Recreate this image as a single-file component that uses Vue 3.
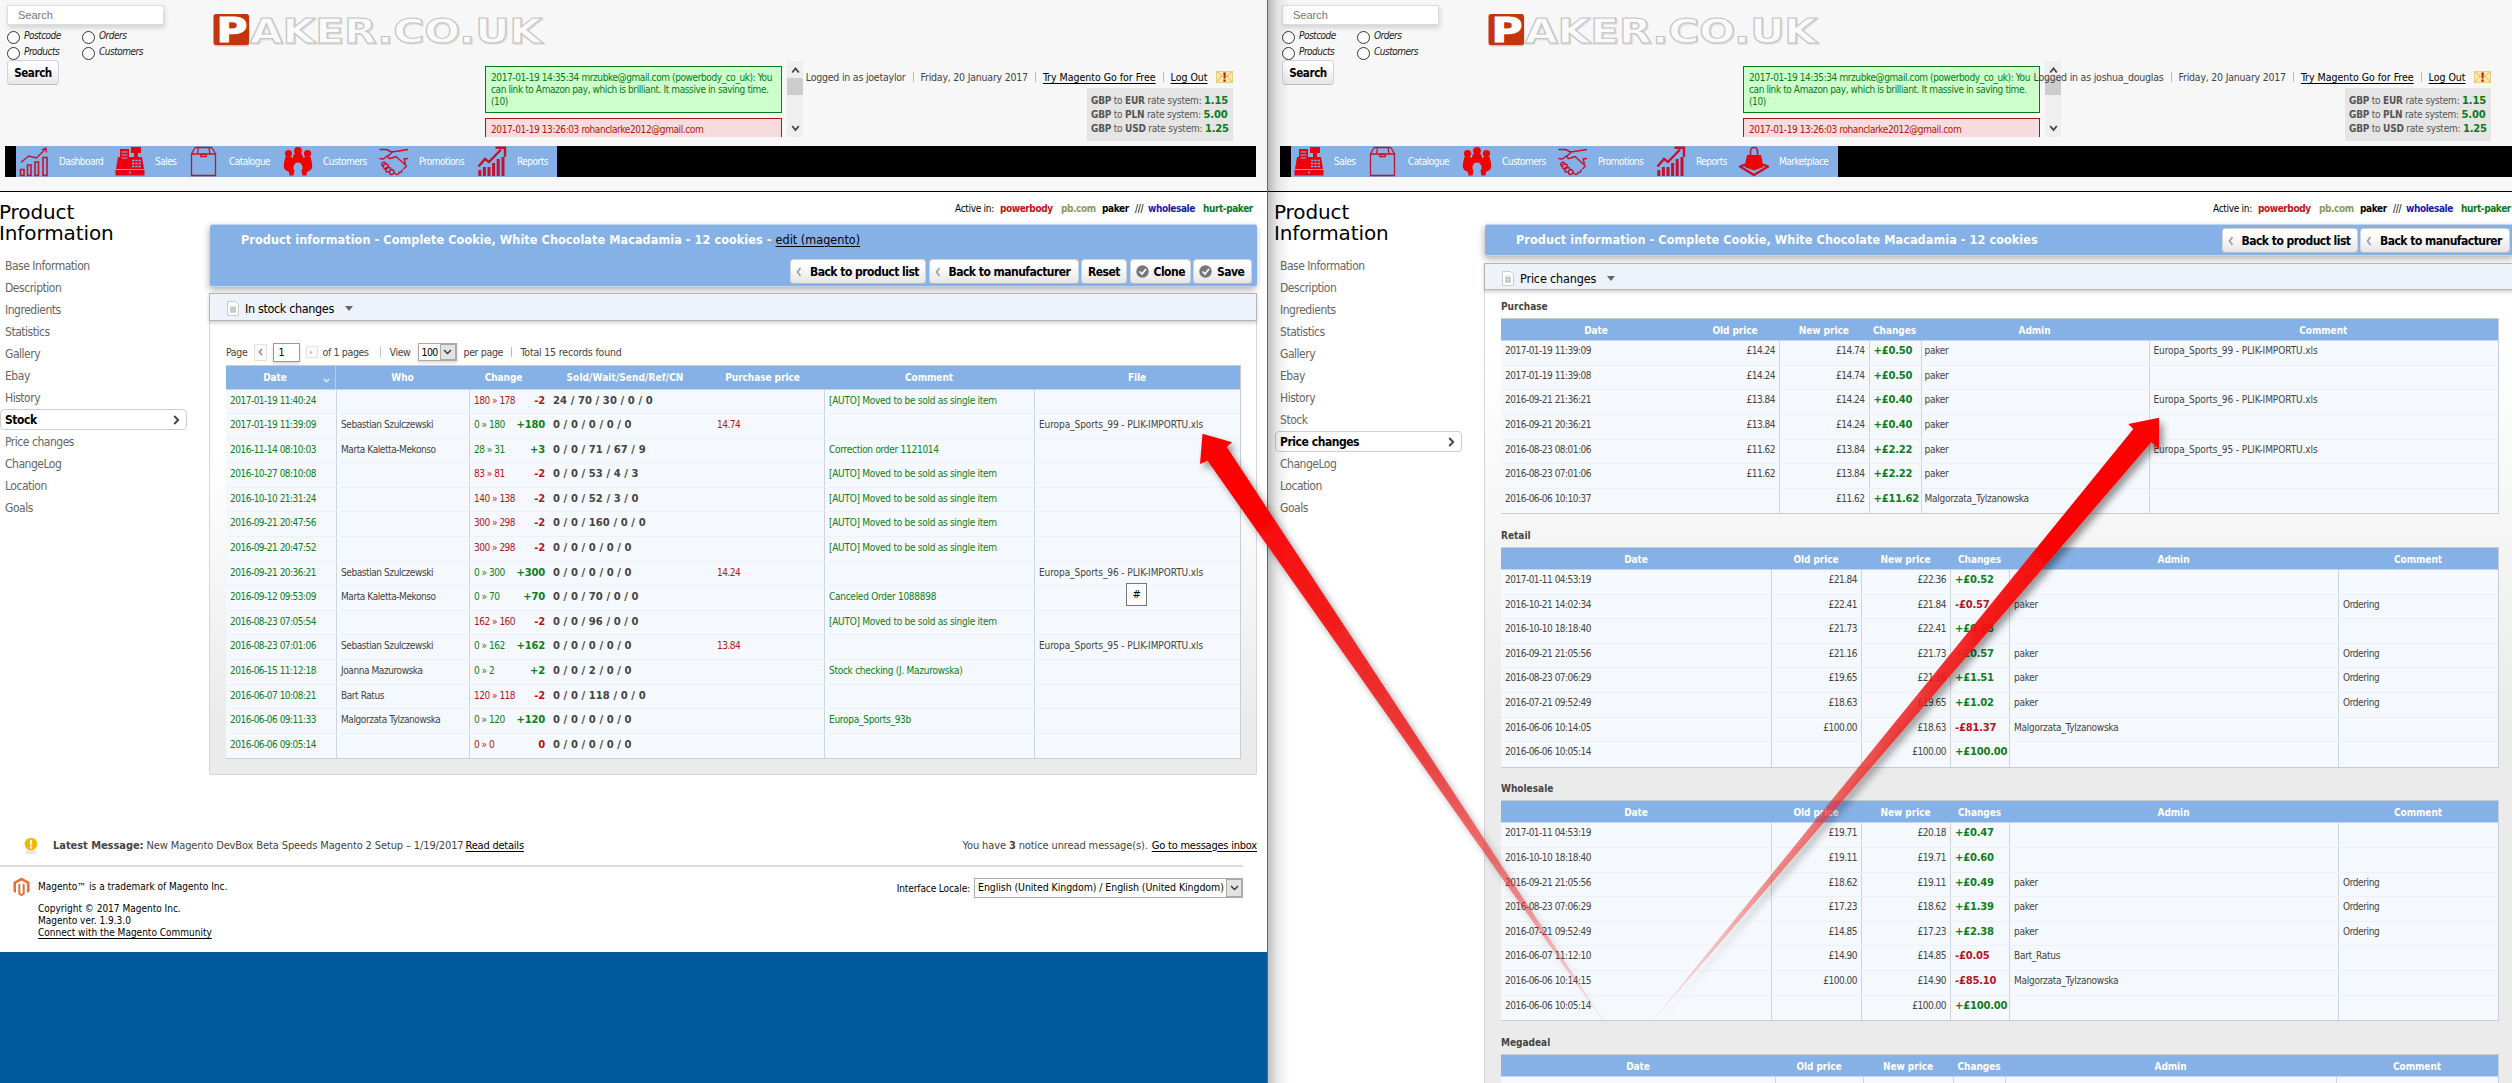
<script setup>
const sideItems = ['Base Information', 'Description', 'Ingredients', 'Statistics', 'Gallery', 'Ebay', 'History', 'Stock', 'Price changes', 'ChangeLog', 'Location', 'Goals']
const rates = [['EUR', '1.15'], ['PLN', '5.00'], ['USD', '1.25']]

const nav = {
  dashboard: { label: 'Dashboard', w: 96 },
  sales: { label: 'Sales', w: 74 },
  catalogue: { label: 'Catalogue', w: 94 },
  customers: { label: 'Customers', w: 96 },
  promotions: { label: 'Promotions', w: 98 },
  reports: { label: 'Reports', w: 83 },
  marketplace: { label: 'Marketplace', w: 102 }
}

const panes = [
  { id: 'stock', user: 'joetaylor', active: 'Stock', section: 'In stock changes', nav: ['dashboard', 'sales', 'catalogue', 'customers', 'promotions', 'reports'] },
  { id: 'price', user: 'joshua_douglas', active: 'Price changes', section: 'Price changes', nav: ['sales', 'catalogue', 'customers', 'promotions', 'reports', 'marketplace'] }
]

const auto = '[AUTO] Moved to be sold as single item'
const stock = [
  ['2017-01-19 11:40:24', '', '180 » 178', '-2', '24 / 70 / 30 / 0 / 0', '', auto, ''],
  ['2017-01-19 11:39:09', 'Sebastian Szulczewski', '0 » 180', '+180', '0 / 0 / 0 / 0 / 0', '14.74', '', 'Europa_Sports_99 - PLIK-IMPORTU.xls'],
  ['2016-11-14 08:10:03', 'Marta Kaletta-Mekonso', '28 » 31', '+3', '0 / 0 / 71 / 67 / 9', '', 'Correction order 1121014', ''],
  ['2016-10-27 08:10:08', '', '83 » 81', '-2', '0 / 0 / 53 / 4 / 3', '', auto, ''],
  ['2016-10-10 21:31:24', '', '140 » 138', '-2', '0 / 0 / 52 / 3 / 0', '', auto, ''],
  ['2016-09-21 20:47:56', '', '300 » 298', '-2', '0 / 0 / 160 / 0 / 0', '', auto, ''],
  ['2016-09-21 20:47:52', '', '300 » 298', '-2', '0 / 0 / 0 / 0 / 0', '', auto, ''],
  ['2016-09-21 20:36:21', 'Sebastian Szulczewski', '0 » 300', '+300', '0 / 0 / 0 / 0 / 0', '14.24', '', 'Europa_Sports_96 - PLIK-IMPORTU.xls'],
  ['2016-09-12 09:53:09', 'Marta Kaletta-Mekonso', '0 » 70', '+70', '0 / 0 / 70 / 0 / 0', '', 'Canceled Order 1088898', ''],
  ['2016-08-23 07:05:54', '', '162 » 160', '-2', '0 / 0 / 96 / 0 / 0', '', auto, ''],
  ['2016-08-23 07:01:06', 'Sebastian Szulczewski', '0 » 162', '+162', '0 / 0 / 0 / 0 / 0', '13.84', '', 'Europa_Sports_95 - PLIK-IMPORTU.xls'],
  ['2016-06-15 11:12:18', 'Joanna Mazurowska', '0 » 2', '+2', '0 / 0 / 2 / 0 / 0', '', 'Stock checking (J. Mazurowska)', ''],
  ['2016-06-07 10:08:21', 'Bart Ratus', '120 » 118', '-2', '0 / 0 / 118 / 0 / 0', '', '', ''],
  ['2016-06-06 09:11:33', 'Malgorzata Tylzanowska', '0 » 120', '+120', '0 / 0 / 0 / 0 / 0', '', 'Europa_Sports_93b', ''],
  ['2016-06-06 09:05:14', '', '0 » 0', '0', '0 / 0 / 0 / 0 / 0', '', '', '']
]

const tables = [
  {
    name: 'Purchase', cls: 'purchase', rows: [
      ['2017-01-19 11:39:09', '£14.24', '£14.74', '+£0.50', 'paker', 'Europa_Sports_99 - PLIK-IMPORTU.xls'],
      ['2017-01-19 11:39:08', '£14.24', '£14.74', '+£0.50', 'paker', ''],
      ['2016-09-21 21:36:21', '£13.84', '£14.24', '+£0.40', 'paker', 'Europa_Sports_96 - PLIK-IMPORTU.xls'],
      ['2016-09-21 20:36:21', '£13.84', '£14.24', '+£0.40', 'paker', ''],
      ['2016-08-23 08:01:06', '£11.62', '£13.84', '+£2.22', 'paker', 'Europa_Sports_95 - PLIK-IMPORTU.xls'],
      ['2016-08-23 07:01:06', '£11.62', '£13.84', '+£2.22', 'paker', ''],
      ['2016-06-06 10:10:37', '', '£11.62', '+£11.62', 'Malgorzata_Tylzanowska', '']
    ]
  },
  {
    name: 'Retail', cls: 'retail', rows: [
      ['2017-01-11 04:53:19', '£21.84', '£22.36', '+£0.52', '', ''],
      ['2016-10-21 14:02:34', '£22.41', '£21.84', '-£0.57', 'paker', 'Ordering'],
      ['2016-10-10 18:18:40', '£21.73', '£22.41', '+£0.68', '', ''],
      ['2016-09-21 21:05:56', '£21.16', '£21.73', '+£0.57', 'paker', 'Ordering'],
      ['2016-08-23 07:06:29', '£19.65', '£21.16', '+£1.51', 'paker', 'Ordering'],
      ['2016-07-21 09:52:49', '£18.63', '£19.65', '+£1.02', 'paker', 'Ordering'],
      ['2016-06-06 10:14:05', '£100.00', '£18.63', '-£81.37', 'Malgorzata_Tylzanowska', ''],
      ['2016-06-06 10:05:14', '', '£100.00', '+£100.00', '', '']
    ]
  },
  {
    name: 'Wholesale', cls: 'retail', rows: [
      ['2017-01-11 04:53:19', '£19.71', '£20.18', '+£0.47', '', ''],
      ['2016-10-10 18:18:40', '£19.11', '£19.71', '+£0.60', '', ''],
      ['2016-09-21 21:05:56', '£18.62', '£19.11', '+£0.49', 'paker', 'Ordering'],
      ['2016-08-23 07:06:29', '£17.23', '£18.62', '+£1.39', 'paker', 'Ordering'],
      ['2016-07-21 09:52:49', '£14.85', '£17.23', '+£2.38', 'paker', 'Ordering'],
      ['2016-06-07 11:12:10', '£14.90', '£14.85', '-£0.05', 'Bart_Ratus', ''],
      ['2016-06-06 10:14:15', '£100.00', '£14.90', '-£85.10', 'Malgorzata_Tylzanowska', ''],
      ['2016-06-06 10:05:14', '', '£100.00', '+£100.00', '', '']
    ]
  },
  { name: 'Megadeal', cls: 'mega', rows: [['', '', '', '', '', '']] }
]
const sign = v => (v.startsWith('+') ? 'green' : 'red')
</script>

<template>
  <div class="screen">
    <div v-for="p in panes" :key="p.id" class="pane" :class="p.id">
      <div class="page">
        <header class="top">
          <div class="topline">
            <div class="finder">
              <div class="search-input">Search</div>
              <div class="radios">
                <span class="radio"><i></i>Postcode</span><span class="radio"><i></i>Orders</span>
                <span class="radio"><i></i>Products</span><span class="radio"><i></i>Customers</span>
              </div>
              <div class="btn search-btn">Search</div>
            </div>
            <div class="brandside">
              <svg class="logo" width="335" height="40" viewBox="0 0 335 40">
                <rect x="1" y="3.5" width="35.5" height="31" rx="3" fill="#000" opacity=".18" />
                <rect x="0.5" y="2" width="35.5" height="31" rx="2.5" fill="#c4340d" />
                <text x="3.5" y="30" class="lp" textLength="31" lengthAdjust="spacingAndGlyphs">P</text>
                <text x="38" y="32" class="ls" textLength="292" lengthAdjust="spacingAndGlyphs">AKER.CO.UK</text>
                <text x="37" y="30.5" class="lt" textLength="292" lengthAdjust="spacingAndGlyphs">AKER.CO.UK</text>
              </svg>
              <div class="inforow">
                <div class="messages">
                  <div class="msglist">
                    <div class="msg ok">2017-01-19 14:35:34 mrzubke@gmail.com (powerbody_co_uk): You<br>can link to Amazon pay, which is brilliant. It massive in saving time.<br>(10)</div>
                    <div class="msg bad">2017-01-19 13:26:03 rohanclarke2012@gmail.com</div>
                  </div>
                  <div class="scroll">
                    <svg width="9" height="17" viewBox="0 0 9 17"><path d="M1.2 11.5 4.5 7.5l3.3 4" fill="none" stroke="#444" stroke-width="1.8" /></svg>
                    <b></b>
                    <svg width="9" height="17" viewBox="0 0 9 17"><path d="M1.2 6 4.5 10l3.3-4" fill="none" stroke="#444" stroke-width="1.8" /></svg>
                  </div>
                </div>
                <div class="account">
                  <div class="userline">
                    <span class="u1">Logged in as {{ p.user }}</span><em></em><span class="u2">Friday, 20 January 2017</span><em></em><a class="u3">Try Magento Go for Free</a><em></em><a class="u4">Log Out</a>
                    <svg class="mail" width="17" height="12" viewBox="0 0 17 12"><rect x=".5" y=".5" width="16" height="11" fill="#fbe9a9" stroke="#e9cf86" /><path d="M.5.5 8.500 7l8-6.500M.5 11.500 6 5m10.500 6.500L11 5" fill="none" stroke="#d8b76a" /><path d="M7.300 1.500h2.600l-.6 6H7.900z" fill="#c61a0c" /><rect x="7.400" y="8.500" width="2.300" height="2.200" fill="#c61a0c" /></svg>
                  </div>
                  <div class="rates">
                    <div v-for="r in rates" :key="r[0]"><b>GBP</b> to <b>{{ r[0] }}</b> rate system: <strong>{{ r[1] }}</strong></div>
                  </div>
                </div>
              </div>
            </div>
          </div>
          <nav class="nav">
            <div v-for="k in p.nav" :key="k" class="navitem" :style="{ width: nav[k].w + 'px' }">
              <svg v-if="k === 'dashboard'" width="30" height="31" viewBox="0 0 30 31" fill="none" stroke="#c4122e" stroke-width="1.600"><path d="M1.500 29.500v-6h3.500v6zM8.500 29.500V19h3.500v10.500zM16 29.500V16h3.500v13.500zM24 29.500V11.500h4v18z" /><path d="M2 16.500 9.500 10l8 2L27 2.500M22.500 4l4.500-2 .5 4.500" stroke-width="1.300" /></svg>
              <svg v-else-if="k === 'sales'" width="30" height="31" viewBox="0 0 30 31"><path d="M16 1h10v6h-3v4h4l2 12H1l2-12h2V3h9v8h5V7h-3zM.5 24h29v5.500h-29z" fill="#ec0010" /><path d="M6.500 6h6M6.500 9h6M6.500 12h6" stroke="#85b1e6" stroke-width="1.200" /><path d="M17 14.500h9M17 17.500h9M17 20.500h9" stroke="#85b1e6" stroke-width="1.600" stroke-dasharray="2.300 1" /><circle cx="15" cy="26.500" r="1" fill="#85b1e6" /></svg>
              <svg v-else-if="k === 'catalogue'" width="30" height="31" viewBox="0 0 30 31" fill="none" stroke="#c4122e" stroke-width="1.300"><path d="M2.500 8h24v21.500h-24zM2.500 8l3-5.500Q6 1.500 7.500 1.500h14q1.500 0 2 1L26.500 8M9.500 1.500 8.500 8M20 1.500l1 6.500" /><rect x="11.500" y="8.500" width="6" height="2.200" rx="1" fill="#85b1e6" /></svg>
              <svg v-else-if="k === 'customers'" width="30" height="31" viewBox="0 0 30 31" fill="#f00000"><circle cx="15" cy="4.800" r="3.900" /><circle cx="5.500" cy="7.500" r="3.600" /><circle cx="24.500" cy="7.500" r="3.600" /><path d="M11 8h8l1.500 4.500L22 10.500h5q1 1 2 7 1 5-2 7l-3 1.500-.5 3.500h-4l-1-5q1.500-2 1-4-1-4-4.500-4t-4.500 4q-.5 2 1 4l-1 5h-4L6 26l-3-1.500q-3-2-2-7 1-6 2-7h5l1.500 2z" /></svg>
              <svg v-else-if="k === 'promotions'" width="30" height="31" viewBox="0 0 30 31" fill="none" stroke="#c4122e" stroke-width="1.400" stroke-linejoin="round"><path d="M.5 3.500h7l5 2.500 7-1 9.500-1.500M.5 12.500l4 .5 4.500-3.500M9 10l5-4.500M9 10q0 3.500 4 2l4-1.500L27.500 20l-3 3M29 12.500l-4 .5 1.500 5" /><path d="M3 17q3-2 4 1M3 17q-1 3 2 3.500M7 18q-4 0-2 4.500 4 1.500 4-1.500 1-3-2-3M9 21q-3 0-2 4.500 3 1.500 4.500-1.500.5-3-2.500-3M12.500 23.500q-3 1-1.500 4.500 3 1.500 4-1.500 0-3-2.500-3M15 26.500l2.500 2q2 .5 2.500-2l2.500-.5 1-2.500" /></svg>
              <svg v-else-if="k === 'reports'" width="30" height="31" viewBox="0 0 30 31"><path d="M2.800 30v-6M7.400 30v-9M12 30v-9M16.600 30V17M21.200 30V13M26 30V11" stroke="#c4122e" stroke-width="3" /><path d="M1.500 20.500 8 13l4 3L24 3.500M18.500 1.800h9.500v9" fill="none" stroke="#c4122e" stroke-width="2.400" /></svg>
              <svg v-else width="30" height="31" viewBox="0 0 30 31"><path d="M6 18.500 1 20.500l14 8.500 14-8.500-5-2" fill="none" stroke="#c4122e" stroke-width="2.400" stroke-linejoin="round" /><path d="M8 9h14l2.500 12L15 24.500 5.500 21z" fill="#f00000" /><path d="M11.500 11V5.500q0-4 3.500-4t3.500 4V11" fill="none" stroke="#c4122e" stroke-width="1.600" /></svg>
              <span>{{ nav[k].label }}</span>
            </div>
          </nav>
        </header>

        <div class="body">
          <aside class="side">
            <h3>Product<br>Information</h3>
            <div v-for="s in sideItems" :key="s" class="sideitem" :class="{ on: s === p.active }">
              <span>{{ s }}</span>
              <svg v-if="s === p.active" width="7" height="10" viewBox="0 0 7 10"><path d="M1.200 1 5.200 5l-4 4" fill="none" stroke="#444" stroke-width="1.900" /></svg>
            </div>
          </aside>

          <main class="main">
            <div class="activein"><span class="a0">Active in:</span><b class="c1">powerbody</b><b class="c2">pb.com</b><b class="c3">paker</b><span class="a4">///</span><b class="c5">wholesale</b><b class="c6">hurt-paker</b></div>

            <div class="head">
              <div class="title"><b>Product information - Complete Cookie, White Chocolate Macadamia - 12 cookies</b><template v-if="p.id === 'stock'"><b>&nbsp;-&nbsp;</b><a>edit (magento)</a></template></div>
              <div class="buttons">
                <div class="btn w1"><svg width="6" height="10" viewBox="0 0 6 10"><path d="M4.500 1 1.500 5l3 4" fill="none" stroke="#999" stroke-width="1.500" /></svg>Back to product list</div>
                <div class="btn w2"><svg width="6" height="10" viewBox="0 0 6 10"><path d="M4.500 1 1.500 5l3 4" fill="none" stroke="#999" stroke-width="1.500" /></svg>Back to manufacturer</div>
                <template v-if="p.id === 'stock'">
                  <div class="btn w3">Reset</div>
                  <div v-for="t in ['Clone', 'Save']" :key="t" class="btn w4"><svg width="13" height="13" viewBox="0 0 13 13"><circle cx="6.500" cy="6.500" r="6.200" fill="#777" /><path d="M3.500 6.500 6 9l4-5" fill="none" stroke="#fff" stroke-width="1.700" /></svg>{{ t }}</div>
                </template>
              </div>
            </div>

            <div class="sechead">
              <svg width="12" height="15" viewBox="0 0 12 15"><path d="M.5.5h8l3 3v11H.5z" fill="#fff" stroke="#ccc" /><path d="M3 5h6v7H3z" fill="#d9d9d9" /><path d="M3 7.500h6M3 10h6" stroke="#bbb" /></svg>
              <span>{{ p.section }}</span><i class="caret"></i>
            </div>

            <div class="secbody">
              <template v-if="p.id === 'stock'">
                <div class="pager">
                  <span class="pg">Page</span>
                  <span class="pbtn"><svg width="5" height="8" viewBox="0 0 5 8"><path d="M4 1 1.300 4 4 7" fill="none" stroke="#888" stroke-width="1.400" /></svg></span>
                  <span class="pinput">1</span>
                  <span class="pnext"><svg width="3" height="5" viewBox="0 0 3 5"><path d="M0 .5 2.500 2.500 0 4.500z" fill="#bbb" /></svg></span>
                  <span class="of">of 1 pages</span><em></em><span class="view">View</span>
                  <span class="psel">100<i><svg width="9" height="6" viewBox="0 0 9 6"><path d="M1 1l3.500 3.500L8 1" fill="none" stroke="#333" stroke-width="1.300" /></svg></i></span>
                  <span class="per">per page</span><em></em><span class="total">Total 15 records found</span>
                </div>
                <div class="table stk">
                  <div class="tr th"><span>Date<svg width="7" height="5" viewBox="0 0 7 5"><path d="M.7.700l2.800 3 2.800-3" fill="none" stroke="#dbe9fa" stroke-width="1.500" /></svg></span><span>Who</span><span>Change</span><span class="wide">Sold/Wait/Send/Ref/CN</span><span>Purchase price</span><span>Comment</span><span>File</span></div>
                  <div v-for="(r, i) in stock" :key="i" class="tr">
                    <span class="green">{{ r[0] }}</span><span class="line nm">{{ r[1] }}</span>
                    <span class="line chg" :class="sign(r[3])"><span>{{ r[2] }}</span><b>{{ r[3] }}</b></span>
                    <span class="qty"><b>{{ r[4] }}</b></span><span class="red pp">{{ r[5] }}</span><span class="line green cmt">{{ r[6] }}</span><span class="line file">{{ r[7] }}</span>
                  </div>
                </div>
              </template>
              <template v-else>
                <section v-for="t in tables" :key="t.name">
                  <h4>{{ t.name }}</h4>
                  <div class="table" :class="t.cls">
                    <div class="tr th"><span>Date</span><span>Old price</span><span>New price</span><span>Changes</span><span>Admin</span><span>Comment</span></div>
                    <div v-for="(r, i) in t.rows" :key="i" class="tr">
                      <span>{{ r[0] }}</span><span class="rt first">{{ r[1] }}</span><span class="rt line">{{ r[2] }}</span><span class="line chv" :class="sign(r[3])"><b>{{ r[3] }}</b></span><span class="line adm">{{ r[4] }}</span><span class="line file">{{ r[5] }}</span>
                    </div>
                  </div>
                </section>
              </template>
            </div>
          </main>
        </div>

        <footer v-if="p.id === 'stock'">
          <div class="latest">
            <svg width="14" height="20" viewBox="0 0 14 20"><ellipse cx="7" cy="15" rx="5.500" ry="2.500" fill="#000" opacity=".1" /><circle cx="7" cy="7" r="6.300" fill="#f2b705" /><rect x="6" y="2.800" width="2" height="5.600" rx="1" fill="#fff" /><circle cx="7" cy="10.500" r="1.200" fill="#fff" /></svg>
            <b class="lb">Latest Message:</b><span class="lm">New Magento DevBox Beta Speeds Magento 2 Setup – 1/19/2017</span><a class="rd">Read details</a>
            <span class="unread">You have <b>3</b> notice unread message(s).</span><a class="inbox">Go to messages inbox</a>
          </div>
          <div class="legal">
            <svg width="17" height="20" viewBox="0 0 17 20"><path d="M8.500.5 16.500 5v9.500l-2.500 1.400V6.500L8.500 3.400 3 6.500v9.400L.5 14.500V5z" fill="#ef6c2f" /><path d="M5.300 7.500 7.300 6.400v9.800l1.200.7 1.200-.7V6.400l2 1.100v9.700l-3.200 2-3.200-2z" fill="#ef6c2f" /></svg>
            <div class="copy">
              <p>Magento™ is a trademark of Magento Inc.</p>
              <p>Copyright © 2017 Magento Inc.</p>
              <p>Magento ver. 1.9.3.0</p>
              <p><a>Connect with the Magento Community</a></p>
            </div>
            <div class="locale"><span>Interface Locale:</span><div class="lsel"><span>English (United Kingdom) / English (United Kingdom)</span><i><svg width="9" height="6" viewBox="0 0 9 6"><path d="M1 1l3.500 3.500L8 1" fill="none" stroke="#333" stroke-width="1.300" /></svg></i></div></div>
          </div>
        </footer>
      </div>
      <div v-if="p.id === 'price'" class="edge"></div>
    </div>

    <div class="hash">#</div>

    <svg class="arrows" width="2512" height="1083" viewBox="0 0 2512 1083">
      <defs>
        <linearGradient id="ga" gradientUnits="userSpaceOnUse" x1="1202" y1="434" x2="1616" y2="1041">
          <stop offset="0" stop-color="#ff0000" /><stop offset=".12" stop-color="#fb0404" /><stop offset=".5" stop-color="#ee2020" stop-opacity=".84" /><stop offset=".75" stop-color="#ee2424" stop-opacity=".5" /><stop offset="1" stop-color="#ee3030" stop-opacity="0" />
        </linearGradient>
        <linearGradient id="gb" gradientUnits="userSpaceOnUse" x1="2159" y1="418" x2="1640" y2="1036">
          <stop offset="0" stop-color="#ff0000" /><stop offset=".2" stop-color="#fb0404" /><stop offset=".5" stop-color="#ee2020" stop-opacity=".84" /><stop offset=".75" stop-color="#ee2424" stop-opacity=".5" /><stop offset="1" stop-color="#ee3030" stop-opacity="0" />
        </linearGradient>
        <filter id="sh" x="-10%" y="-10%" width="120%" height="120%"><feDropShadow dx="4" dy="5" stdDeviation="3.500" flood-color="#000" flood-opacity=".4" /></filter>
      </defs>
      <path filter="url(#sh)" fill="url(#ga)" d="M1202.500 433.700 1232 442.300l-5.200 4.700L1617 1041 1207.500 460.700 1200 464z" />
      <path filter="url(#sh)" fill="url(#gb)" d="M2159 417.700v31.600l-7.700-7L1640 1036 2133.300 429l-5-5z" />
    </svg>
  </div>
</template>

<style>
body { margin: 0; overflow: hidden; background: #005a9b; }
</style>

<style scoped>
* { box-sizing: border-box; }
.screen { position: relative; display: flex; width: 2512px; height: 1083px; overflow: hidden; background: #005a9b; font-family: "DejaVu Sans Condensed", "DejaVu Sans", sans-serif; font-stretch: condensed; font-size: 10px; letter-spacing: -.5px; color: #444; white-space: nowrap; }
a { color: #000; text-decoration: underline; text-underline-offset: 2px; }
svg { flex: none; display: block; }
em, i { font-style: normal; flex: none; }
.pane { position: relative; flex: none; overflow: hidden; background: #fff; }
.pane.stock { width: 1267px; height: 952px; }
.pane.price { width: 1245px; height: 1083px; border-left: 1px solid #2c7a9e; background: linear-gradient(#f7f7f7 191px, #000 191px, #000 192px, #fff 192px); }
.stock .page { width: 1257px; }
.price .page { width: 1240px; margin-left: 7px; }
.edge { position: absolute; left: 0; top: 0; width: 22px; height: 100%; background: linear-gradient(90deg, rgba(0, 0, 0, .25), rgba(0, 0, 0, .08) 45%, transparent); }

.top { height: 192px; background: #f7f7f7; box-shadow: 12px 0 #f7f7f7; border-bottom: 1px solid #000; }
.stock .top { margin-right: -10px; padding-right: 10px; box-shadow: none; }
.topline { display: flex; height: 146px; }
.finder { width: 213px; padding: 5px 0 0 7px; }
.search-input { width: 157px; height: 20px; padding-left: 10px; background: #fff; border: 1px solid #ddd; box-shadow: 1px 3px 5px rgba(0, 0, 0, .15); font: 11px/18px "Liberation Sans", sans-serif; letter-spacing: 0; color: #777; }
.radios { display: grid; grid-template-columns: 75px 90px; grid-auto-rows: 15.500px; margin-top: 4px; font-style: italic; color: #222; letter-spacing: -.5px; }
.radio { display: flex; align-items: flex-start; line-height: 13px; }
.radio i { width: 13px; height: 13px; margin: 2px 4px 0 0; border: 1px solid #333; border-radius: 50%; background: #fff; }
.btn { display: flex; align-items: center; height: 25px; border: 1px solid #d0d4da; border-bottom-color: #bbb; border-radius: 4px; background: linear-gradient(#fff 20%, #e6e6e6); font-size: 12px; font-weight: bold; color: #000; letter-spacing: -.52px; }
.search-btn { width: 52px; justify-content: center; letter-spacing: -.4px; font-size: 11.500px; }

.brandside { flex: 1; min-width: 0; }
.logo { margin: 12px 0 9px; letter-spacing: 0; overflow: visible; }
.lp, .ls, .lt { font-family: "DejaVu Sans", sans-serif; font-weight: bold; font-size: 34px; font-stretch: normal; }
.lp { font-size: 33px; fill: #fff; stroke: #fff; stroke-width: 1px; }
.ls { fill: #ccc; stroke: #ccc; stroke-width: 1.500px; opacity: .6; }
.lt { fill: #fafafa; stroke: #c4c4c4; stroke-width: 1px; }
.inforow { display: flex; height: 85px; }
.messages { display: flex; flex: none; width: 318px; height: 76px; margin-left: 272px; overflow: hidden; }
.price .messages { margin-left: 255px; }
.msglist { width: 297px; padding-top: 5px; overflow: hidden; }
.msg { padding: 5px; margin-bottom: 5px; border: 1px solid; line-height: 12px; letter-spacing: -.4px; }
.msg.ok { height: 47px; border-color: #0a7a1a; background: #cfc; color: #0a7a1a; }
.msg.bad { height: 40px; border-color: #b01515; background: #f6dcdc; color: #b81414; }
.scroll { display: flex; flex-direction: column; align-items: center; width: 16px; margin-left: 5px; background: #efefef; }
.scroll b { width: 100%; height: 17px; background: #cdcdcd; }
.scroll svg:last-child { margin-top: auto; }
.account { flex: 1; min-width: 0; display: flex; flex-direction: column; align-items: flex-end; padding: 10px 24.500px 0 0; z-index: 1; }
.userline { display: flex; align-items: center; height: 12px; margin-bottom: 5px; font-size: 10.500px; letter-spacing: -.22px; }
.userline em, .pager em { width: 1px; height: 10px; background: #bbb; }
.userline em { margin: 0 7px; }
.u3, .u4 { letter-spacing: -.01px; }
.mail { margin-left: 8px; }
.rates { width: 145.500px; height: 53px; padding: 6px 0 0 4px; background: #e5e5e5; line-height: 14px; color: #555; letter-spacing: -.22px; }
.rates strong { font-family: "DejaVu Sans", sans-serif; color: #0a7a1a; font-stretch: normal; letter-spacing: -.2px; }

.nav { display: flex; height: 31px; margin: 0 1px 0 5px; padding-left: 11px; background: #000; }
.price .nav { margin-right: 0; }
.navitem { display: flex; align-items: center; flex: none; padding-left: 3px; background: #85b1e6; color: #fff; }
.navitem span { margin-left: 10px; letter-spacing: -.52px; padding-bottom: 1px; }

.body { display: flex; }
.side { width: 187px; flex: none; padding-top: 10px; }
.side h3 { margin: 0 0 11px -1px; font-family: "DejaVu Sans", sans-serif; font-stretch: normal; font-weight: normal; font-size: 20px; line-height: 21px; color: #000; letter-spacing: -.1px; }
.sideitem { display: flex; align-items: center; justify-content: space-between; height: 22px; padding: 0 15px 0 5px; font-size: 12px; color: #666; letter-spacing: -.47px; }
.sideitem.on { height: 21px; margin: 0 0 1px; padding: 0 6px 0 4px; border: 1px solid #ccc; border-radius: 4px; background: #fff; color: #000; font-weight: bold; letter-spacing: -.45px; }

.main { flex: none; width: 1048px; margin-left: 22px; }
.price .main { width: 1031px; }
.activein { display: flex; justify-content: flex-end; height: 32px; line-height: 34px; color: #000; }
.a0 { width: 45px; } .c1 { width: 61px; color: #c4121a; } .c2 { width: 41px; color: #8a9a5b; } .c3 { width: 33px; color: #000; } .a4 { width: 13px; } .c5 { width: 55px; color: #1a1aa8; } .c6 { width: 54px; color: #0a7a1a; }
.activein b { letter-spacing: -.42px; }
.a0, .a4 { letter-spacing: -.3px; }
.head { display: flex; flex-direction: column; height: 63px; margin-left: 1px; border: solid #c3d6ec; border-width: 1px 0; border-radius: 3px; background: #85b1e6; box-shadow: -1px 3px 7px rgba(0, 0, 0, .3); }
.title { padding-left: 31px; height: 33px; line-height: 30px; font-size: 12.500px; color: #fff; letter-spacing: .09px; }
.title a { letter-spacing: .02px; }
.buttons { display: flex; justify-content: flex-end; gap: 2.500px; padding: 1px 5px 0 0; }
.price .head { flex-direction: row; justify-content: space-between; height: 32px; }
.price .buttons { padding-top: 3px; }
.btn.w1, .btn.w2 { padding-left: 5px; }
.btn svg { margin-right: 8px; }
.w1 { width: 136px; } .w2 { width: 150px; } .w3 { width: 46px; justify-content: center; } .w4 { width: 61px; padding-left: 5px; }
.w4 + .w4 { width: 59px; }
.btn.w4 svg { margin-right: 5px; }

.sechead { display: flex; align-items: center; height: 28px; margin-top: 6px; padding: 3px 0 0 17px; border: 1px solid #b4b4b4; background: #edf2fb; box-shadow: 0 2px 4px rgba(0, 0, 0, .2); position: relative; font-size: 12.500px; letter-spacing: -.36px; color: #000; }
.price .sechead { height: 27px; margin-top: 7px; }
.price .sechead span { letter-spacing: -.15px; }
.sechead svg { margin-right: 6px; }
.caret { margin-left: 11px; border: 4px solid transparent; border-top: 5px solid #666; border-bottom: 0; }
.secbody { border: 1px solid #d6d6d6; border-top: 0; border-radius: 0 0 2px 2px; background: linear-gradient(#fff 130px, #ebebeb 88%); }
.stock .secbody { height: 454px; padding: 22px 0 0 16px; }
.price .secbody { height: 830px; padding: 11px 0 0 16px; background: linear-gradient(#fff 60px, #ebebeb 440px); }

.pager { display: flex; align-items: center; height: 18px; margin-bottom: 4px; font-size: 10.500px; letter-spacing: -.35px; }
.pager span { flex: none; }
.pg { width: 27.500px; }
.pbtn, .pnext { display: flex; align-items: center; justify-content: center; border: 1px solid #e2e2e2; background: #fafafa; }
.pbtn { width: 13px; height: 17px; margin-right: 6px; }
.pinput { width: 27px; height: 19px; padding-left: 5px; border: 1px solid #999; background: #fff; color: #000; line-height: 17px; margin-right: 6px; box-shadow: 0 2px 3px rgba(0, 0, 0, .15); }
.pnext { width: 12px; height: 12px; margin-right: 5px; }
.of { width: 57px; }
.view { width: 28px; margin-left: 9px; }
.psel { display: flex; width: 39px; height: 18px; padding-left: 3px; border: 1px solid #aaa; background: #fff; color: #000; line-height: 16px; margin-right: 7px; box-shadow: 0 2px 3px rgba(0, 0, 0, .15); letter-spacing: -.6px; }
.psel i, .lsel i { display: flex; align-items: center; justify-content: center; width: 16px; margin-left: auto; border: 1px solid #aaa; background: #e3e3e3; }
.per { width: 47px; }
.pager em:last-of-type { margin-right: 9px; }
.total { letter-spacing: -.18px; }

.table { border: 1px solid #c8cdd3; border-left: 0; background: #f5f9fd; width: 1015px; }
.price .table { width: 998px; }
.tr { display: grid; height: 24.600px; border-bottom: 1px solid #edf1f5; }
.tr:last-child { border-bottom: 0; }
.stk .tr { grid-template-columns: 110px 133px 80px 152px 123px 210px 206px; }
.purchase .tr { grid-template-columns: 190px 88px 89.500px 52px 228px 349.500px; }
.retail .tr { grid-template-columns: 270px 90px 89px 59px 329px 160px; }
.mega .tr { grid-template-columns: 274px 88px 90px 52px 331px 162px; }
.tr > span { padding-left: 4px; line-height: 21px; }
.price .tr > span { line-height: 20px; }
.th.tr { height: 23.500px; background: #85b1e6; border-bottom: 1px solid #c3d6ec; }
.price .th.tr { height: 22.200px; }
.th.tr > span, .price .th.tr > span { padding: 0; line-height: 23px; text-align: center; color: #fff; font-weight: bold; letter-spacing: -.05px; }
.th.tr > span.wide { letter-spacing: .1px; }
.stk .th > span:first-child { position: relative; padding-right: 11px; border-right: 1px solid #b3cff0; }
.th svg { position: absolute; right: 5px; top: 12px; }
.stk .th > span:nth-child(3) { padding-right: 11px; }
.line { border-left: 1px solid #ced4dc; }
.retail .first, .mega .first { border-left: 1px solid #ced4dc; }
.rt { text-align: right; padding-right: 4px; }
.nm { letter-spacing: -.42px; }
.cmt { letter-spacing: -.27px; }
.adm { letter-spacing: -.27px; }
.file { letter-spacing: -.08px; }
.retail .file { letter-spacing: -.4px; }
.purchase .adm { padding-left: 3px; }
.green { color: #0f7d20; }
.red { color: #b8141c; }
.chg { display: flex; justify-content: space-between; }
.chg b, .qty b, .chv b { font-family: "DejaVu Sans", sans-serif; font-stretch: normal; font-size: 10px; letter-spacing: -.2px; }
.qty b { letter-spacing: .08px; color: #444; }
.chg b { margin-right: 4px; }
.tr > .pp { padding-left: 16px; }
section h4 { margin: 0; height: 17px; font-size: 10px; line-height: 11px; letter-spacing: 0; color: #444; }
section .table { margin-bottom: 15.500px; }

footer { margin-right: -10px; }
.latest { display: flex; align-items: center; height: 90px; padding: 50px 0 0 24px; font-size: 11px; letter-spacing: -.12px; width: 1257px; }
.latest svg { margin: 4px 15px 0 0; }
.lb { letter-spacing: -.05px; }
.lm { margin-left: 3px; }
.rd { margin-left: 2px; }
.rd, .inbox { letter-spacing: -.22px; }
.unread { margin-left: auto; margin-right: 4px; }
.legal { display: flex; width: 1243px; padding-top: 11px; border-top: 2px solid #ddd; color: #000; letter-spacing: 0; }
.legal > svg { margin: -1px 8px 0 13px; }
.copy p { margin: 0; line-height: 12px; }
.copy p:first-child { margin: 3px 0 10px; }
.locale { display: flex; align-items: center; margin-left: auto; height: 20px; }
.locale > span { margin-right: 4px; letter-spacing: -.1px; }
.lsel { display: flex; width: 269px; height: 20px; padding-left: 3px; border: 1px solid #aaa; background: #fff; font-size: 10.500px; line-height: 17px; }
.lsel span { flex: none; letter-spacing: -.08px; }

.hash { position: absolute; left: 1126px; top: 583px; width: 21px; height: 23px; border: 1px solid #777; background: #fff; color: #000; text-align: center; line-height: 21px; font-size: 11px; }
.arrows { position: absolute; left: 0; top: 0; pointer-events: none; }
</style>
